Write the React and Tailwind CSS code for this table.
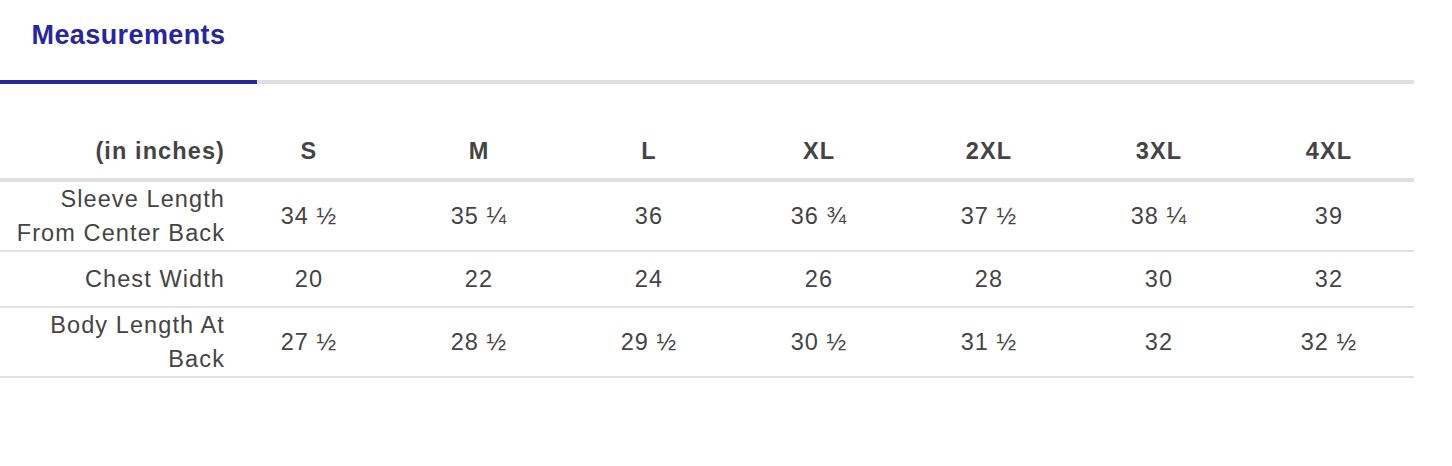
const sizes = ['S', 'M', 'L', 'XL', '2XL', '3XL', '4XL'];

const rows = [
  { label: ['Sleeve Length', 'From Center Back'], values: ['34 ½', '35 ¼', '36', '36 ¾', '37 ½', '38 ¼', '39'], height: 'h-[68px]' },
  { label: ['Chest Width'], values: ['20', '22', '24', '26', '28', '30', '32'], height: 'h-[54px]' },
  { label: ['Body Length At', 'Back'], values: ['27 ½', '28 ½', '29 ½', '30 ½', '31 ½', '32', '32 ½'], height: 'h-[68px]' },
];

function App() {
  return (
    <div className="w-[1452px] h-[466px] bg-white font-['Liberation_Sans',Arial,sans-serif] text-[#444444]">
      <div className="w-[1414px]">
        {/* Tabs */}
        <div className="flex border-b-4 border-[#dedee3]">
          <div className="w-[257px] h-[84px] -mb-1 border-b-4 border-[#27279b] pt-[15px] text-center">
            <span className="text-[27px] leading-[40px] font-bold tracking-[0.4px] text-[#27279b]">Measurements</span>
          </div>
        </div>

        {/* Table */}
        <div className="mt-10 text-[23.5px] leading-[34px] tracking-[1.1px]">
          <div className="grid grid-cols-[224px_repeat(7,170px)] h-[58px] items-center border-b-4 border-[#dedee3] font-bold">
            <div className="text-right -mr-[1px]">(in inches)</div>
            {sizes.map((s) => (
              <div key={s} className="text-center">{s}</div>
            ))}
          </div>

          {rows.map((row, i) => (
            <div
              key={i}
              className={`grid grid-cols-[224px_repeat(7,170px)] items-center border-b-2 border-[#e1e1e5] box-content ${row.height}`}
            >
              <div className="text-right -mr-[1px]">
                {row.label.map((line) => (
                  <div key={line}>{line}</div>
                ))}
              </div>
              {row.values.map((v, j) => (
                <div key={j} className="text-center">{v}</div>
              ))}
            </div>
          ))}
        </div>
      </div>
    </div>
  );
}

export default App;
